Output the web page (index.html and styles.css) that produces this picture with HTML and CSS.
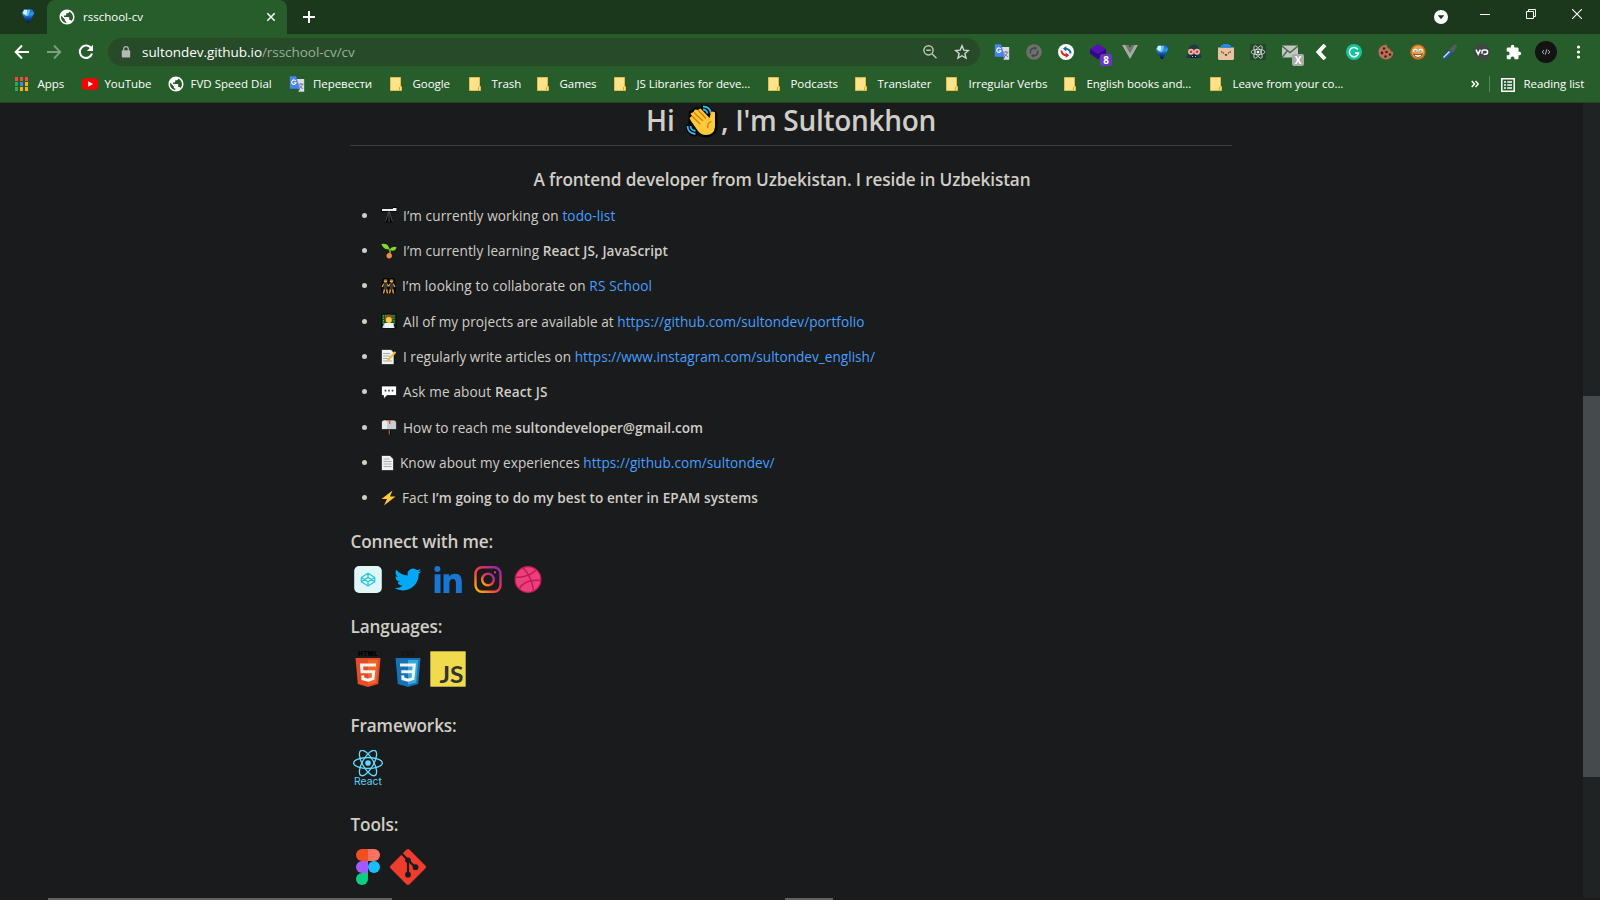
FILE: index.html
```html
<!DOCTYPE html>
<html lang="en">
<head>
<meta charset="utf-8">
<title>rsschool-cv</title>
<link rel="stylesheet" href="styles.css">
</head>
<body>
<svg width="0" height="0" class="defs" aria-hidden="true">
  <defs>
    <linearGradient id="gem" x1="0" y1="0" x2="0" y2="1"><stop offset="0" stop-color="#0d5fd0"/><stop offset=".35" stop-color="#2f9cf0"/><stop offset=".7" stop-color="#0b3f9c"/><stop offset="1" stop-color="#04173f"/></linearGradient>
    <linearGradient id="insta" x1="0" y1="1" x2="1" y2="0"><stop offset="0" stop-color="#ffc107"/><stop offset=".35" stop-color="#f9552f"/><stop offset=".6" stop-color="#e0325c"/><stop offset="1" stop-color="#8a24b8"/></linearGradient>
    <symbol id="i-gem" viewBox="0 0 16 16"><path d="M4 1.200h8L14.300 5 9 15H7L1.700 5z" fill="url(#gem)"/><path d="M4 1.800h3.500L6.500 8 2.800 5z" fill="#d8f3ff"/><path d="M7.500 1.800h2.800L8 8H6.500z" fill="#6fc4fa"/></symbol>
    <symbol id="i-globe" viewBox="1.300 1.300 21.400 21.400"><path d="M12 2C6.480 2 2 6.480 2 12s4.480 10 10 10 10-4.480 10-10S17.520 2 12 2zm-1 17.930c-3.950-.490-7-3.850-7-7.930 0-.620.080-1.210.210-1.790L9 15v1c0 1.100.900 2 2 2v1.930zm6.900-2.540c-.260-.810-1-1.390-1.900-1.390h-1v-3c0-.550-.450-1-1-1H8v-2h2c.550 0 1-.450 1-1V7h2c1.100 0 2-.900 2-2v-.410c2.930 1.190 5 4.060 5 7.410 0 2.080-.800 3.970-2.100 5.390z" fill="#fff"/></symbol>
    <symbol id="i-translate" viewBox="0 0 16 16"><path d="M7 3h8.200v12.800H9.500z" fill="#dadce0"/><path d="M9.500 8.200h5M12 7v1.200M13.500 8.200c-.5 2-1.800 3.500-3.500 4.500M10.500 9.500c.8 1.500 1.800 2.400 3.300 3.200" stroke="#6b7684" stroke-width=".9" fill="none"/><path d="M.8.300H7L11 12.800H.8z" fill="#4a84ee"/><path d="M8.800 12.800 11 12.800 9.500 15.800z" fill="#2a56c6"/><path d="M6.800 5A2.200 2.200 0 1 0 7 6.800H5" stroke="#fff" stroke-width="1.100" fill="none"/></symbol>
    <symbol id="i-folder" viewBox="0 0 12 14"><path d="M.5.500h10v9h1v4H.5z" fill="#ffe28c" stroke="#e9bd45"/><path d="M9.500 10v3.500" stroke="#d9a92c"/></symbol>
    <symbol id="i-react" viewBox="-12 -12 24 24"><circle r="2.200" fill="currentColor"/><g fill="none" stroke="currentColor" stroke-width="1.050"><ellipse rx="11.200" ry="4.300"/><ellipse rx="11.200" ry="4.300" transform="rotate(60)"/><ellipse rx="11.200" ry="4.300" transform="rotate(120)"/></g></symbol>
  </defs>
</svg>

<header class="tabstrip">
  <div class="pinned"><svg class="s16"><use href="#i-gem"/></svg></div>
  <div class="tab">
    <svg class="s16"><use href="#i-globe"/></svg>
    <span class="tab-title">rsschool-cv</span>
    <svg class="tab-close" viewBox="0 0 10 10"><path d="M1.300 1.300l7.400 7.400M8.700 1.300 1.300 8.700" stroke="#fff" stroke-width="1.500"/></svg>
  </div>
  <svg class="newtab" viewBox="0 0 12 12"><path d="M6 0v12M0 6h12" stroke="#fff" stroke-width="2"/></svg>
  <div class="window-buttons">
    <svg viewBox="0 0 14 14" class="search-tabs"><circle cx="7" cy="7" r="7" fill="#fff"/><path d="M3.800 5.200h6.400L7 9.300z" fill="#1b381c"/></svg>
    <svg viewBox="0 0 10 10" class="wb"><path d="M0 5.500h10" stroke="#fff"/></svg>
    <svg viewBox="0 0 10 10" class="wb"><path d="M.5 2.500h7v7h-7zM2.500 2.500v-2h7v7h-2" fill="none" stroke="#fff"/></svg>
    <svg viewBox="0 0 10 10" class="wb"><path d="M0 0l10 10M10 0 0 10" stroke="#fff" stroke-width="1.100"/></svg>
  </div>
</header>

<nav class="toolbar">
  <span class="cell"><svg class="s16" viewBox="0 0 16 16"><path d="M15 8H2M8 1.500 1.700 8 8 14.500" fill="none" stroke="#fff" stroke-width="2"/></svg></span>
  <span class="cell"><svg class="s16" viewBox="0 0 16 16"><path d="M1 8h13M8 1.500 14.300 8 8 14.500" fill="none" stroke="#7f9f81" stroke-width="1.800"/></svg></span>
  <span class="cell"><svg class="s16" viewBox="0 0 16 16"><path d="M13.300 4.500A6.200 6.200 0 1 0 14 9.500" fill="none" stroke="#fff" stroke-width="2"/><path d="M15 .8V7H8.800z" fill="#fff"/></svg></span>
  <div class="omnibox">
    <svg class="lock" viewBox="0 0 10 12"><rect x=".8" y="4.300" width="8.400" height="7.200" rx=".8" fill="#b4b9b8"/><path d="M2.700 5V3a2.300 2.300 0 0 1 4.600 0v2" fill="none" stroke="#b4b9b8" stroke-width="1.200"/></svg>
    <span class="url">sultondev.github.io<span class="path">/rsschool-cv/cv</span></span>
    <svg class="s16" viewBox="0 0 16 16"><g fill="none" stroke="#b9c4ba" stroke-width="1.500"><circle cx="6.500" cy="6.300" r="4.600"/><path d="M10 9.800l4.500 4.500M4.300 6.300h4.400"/></g></svg>
    <svg class="s16" viewBox="0 0 16 16"><path d="M8 1.800l1.800 4.300 4.600.4-3.500 3 1.100 4.600L8 11.700l-4 2.400 1.100-4.600-3.500-3 4.600-.4z" fill="none" stroke="#d0d8d0" stroke-width="1.400"/></svg>
  </div>
  <div class="extensions">
    <span class="cell"><svg class="s16"><use href="#i-translate"/></svg></span>
    <span class="cell"><svg class="s16" viewBox="0 0 16 16"><circle cx="8" cy="8" r="7.800" fill="#6f6f6f"/><path d="M4.500 9.500A4 4 0 0 1 9 4.200M11.500 6.500A4 4 0 0 1 7 11.800" fill="none" stroke="#3d4a3e" stroke-width="1.600"/><path d="M8.500 2.300v4L11 4.200zM7.500 9.700v4L5 11.800z" fill="#3d4a3e"/></svg></span>
    <span class="cell"><svg class="s16" viewBox="0 0 16 16"><circle cx="8" cy="8" r="8" fill="#fff"/><path d="M12.600 9.500A4.800 4.800 0 0 0 7.500 4.800" fill="none" stroke="#1c6a9c" stroke-width="2"/><path d="M8.300 2v5.500L4.800 4.700z" fill="#1c6a9c"/><path d="M3.400 6.500A4.800 4.800 0 0 0 8.500 11.200" fill="none" stroke="#e02424" stroke-width="2"/><path d="M7.700 8.500V14l3.500-2.800z" fill="#e02424"/></svg></span>
    <span class="cell"><svg class="s16" viewBox="0 0 16 16"><path d="M8 0l8 5-8 5-8-5z" fill="#5511b8"/><path d="M0 5l8 5 8-5v4.500L8 15.500 0 9.500z" fill="#35058f"/></svg><b class="badge violet">8</b></span>
    <span class="cell"><svg class="s16" viewBox="0 0 16 16"><path d="M0 1h3.500L8 8.800 12.500 1H16L8 15z" fill="#a8aaa8"/><path d="M3.500 1h3L8 3.700 9.500 1h3L8 8.800z" fill="#717771"/></svg></span>
    <span class="cell"><svg class="s16"><use href="#i-gem"/></svg></span>
    <span class="cell"><svg class="s16" viewBox="0 0 16 16"><path d="M2.500 7C2.500 2.500 5 .8 8 .8s5.500 1.700 5.500 6.200L16 14H0z" fill="#20384a"/><path d="M4 14l2-3h4l2 3z" fill="#10202c"/><circle cx="5" cy="7.800" r="3" fill="#f5b7a6"/><circle cx="11" cy="7.800" r="3" fill="#f5b7a6"/><circle cx="5" cy="7.800" r="1.300" fill="#c8362e"/><circle cx="11" cy="7.800" r="1.300" fill="#c8362e"/><path d="M6 12.500h1M9 12.500h1" stroke="#bcd"/></svg></span>
    <span class="cell"><svg class="s16" viewBox="0 0 16 16"><path d="M0 3.500h16V15l-1 1H1l-1-1z" fill="#e9c3a0"/><path d="M3 3.700V1h2V0h6v1h2v2.700z" fill="#2488e8"/><path d="M3 8h1.500M11.500 8H13M5.500 8.500v1M10.500 8.500v1M7 10.500q1 1 2 0" fill="none" stroke="#2b2320" stroke-width="1.200"/></svg></span>
    <span class="cell"><svg class="s16 react-ext" viewBox="-8 -8 16 16"><use href="#i-react" x="-7.500" y="-7.500" width="15" height="15"/></svg></span>
    <span class="cell"><svg class="s16" viewBox="0 0 16 16"><path d="M0 1.500h16v12H0z" fill="#c3c7c3"/><path d="M0 2l8 6.500L16 2M0 13.500l5.500-7" fill="none" stroke="#4b6a4d" stroke-width="1.400"/></svg><b class="badge grey">X</b></span>
    <span class="cell"><svg class="s16" viewBox="0 0 16 16"><path d="M11 1 4.500 8 11 15" fill="none" stroke="#fff" stroke-width="4"/></svg></span>
    <span class="cell"><svg class="s16" viewBox="0 0 16 16"><circle cx="8" cy="8" r="8" fill="#15c39a"/><path d="M11.800 5.500A4.600 4.600 0 1 0 12.500 9H9" fill="none" stroke="#fff" stroke-width="1.500"/></svg></span>
    <span class="cell"><svg class="s16" viewBox="0 0 16 16"><path d="M9 .8A3.500 3.500 0 0 0 12 5c0 2 1.500 3 3.300 3A7.400 7.400 0 1 1 9 .8z" fill="#b87058"/><g fill="#4a1d14"><circle cx="6" cy="4.500" r="1.300"/><circle cx="4" cy="9" r="1.400"/><circle cx="8.500" cy="8" r="1.300"/><circle cx="7.500" cy="12.500" r="1.300"/><circle cx="12" cy="10.500" r="1.300"/></g></svg></span>
    <span class="cell"><svg class="s16" viewBox="0 0 16 16"><circle cx="8" cy="8" r="7.800" fill="#b8641c"/><circle cx="8" cy="8" r="6.500" fill="#e5a050"/><ellipse cx="5.300" cy="6.500" rx="2.300" ry="1.700" fill="#fff"/><ellipse cx="10.700" cy="6.500" rx="2.300" ry="1.700" fill="#fff"/><path d="M4.500 7h2M9.500 7h2" stroke="#432"/><path d="M3.500 10q4.500 1.500 9 0-1.500 3.500-4.500 3.500t-4.500-3.500z" fill="#fff" stroke="#7c3b12" stroke-width=".9"/></svg></span>
    <span class="cell"><svg class="s16" viewBox="0 0 16 16"><path d="M1 15l1-3 6-6 2.500 2.500-6.500 6z" fill="#2c50c8"/><path d="M1.500 13.500 7.500 7.500" stroke="#dce4ff" fill="none" stroke-width="1.300"/><path d="M7.500 5 12.500.5q2.500-.5 2.500 2L11 9z" fill="#555b60"/></svg></span>
    <span class="cell"><svg class="s16" viewBox="0 0 16 16"><circle cx="8" cy="8" r="8" fill="#3f4542"/><path d="M2 5.700l2.200 4.500 2.200-4.500M8 9.800V7.500Q8 6 10 6h1.500a2 2 0 0 1 0 4.200H9.500" fill="none" stroke="#fff" stroke-width="1.500"/></svg></span>
    <span class="cell"><svg class="s16" viewBox="1 0 23 23"><path d="M20.500 11H19V7c0-1.100-.9-2-2-2h-4V3.500a2.500 2.500 0 0 0-5 0V5H4c-1.100 0-1.990.9-1.990 2v3.800H3.500c1.490 0 2.700 1.210 2.700 2.700s-1.210 2.700-2.700 2.700H2V20c0 1.100.9 2 2 2h3.800v-1.500c0-1.490 1.210-2.700 2.700-2.700s2.700 1.210 2.700 2.700V22H17c1.100 0 2-.9 2-2v-4h1.500a2.500 2.500 0 0 0 0-5z" fill="#fff"/></svg></span>
    <span class="cell"><svg class="avatar" viewBox="0 0 22 22"><circle cx="11" cy="11" r="11" fill="#131313"/><path d="M9 9 7.200 11 9 13M13 9l1.800 2L13 13M11.800 8.300l-1.500 5.400" fill="none" stroke="#c6c6c6" stroke-width=".9"/></svg></span>
    <span class="cell"><svg class="s16" viewBox="0 0 16 16"><g fill="#fff"><circle cx="8.500" cy="3" r="1.600"/><circle cx="8.500" cy="8" r="1.600"/><circle cx="8.500" cy="13" r="1.600"/></g></svg></span>
  </div>
</nav>

<nav class="bookmarks">
  <span class="bm"><svg class="bmi" viewBox="0 0 14 14"><g fill="#f04b3c"><path d="M0 0h3v4H0zM5 0h3v4H5zM10 0h3v4h-3z"/></g><path d="M0 5h3v4H0zM0 10h3v4H0z" fill="#2fa653"/><path d="M5 5h3v4H5z" fill="#4285f4"/><path d="M10 5h3v4h-3zM5 10h3v4H5zM10 10h3v4h-3z" fill="#f7b211"/></svg><span>Apps</span></span>
  <span class="bm"><svg class="s16" viewBox="0 0 16 16"><rect x="0" y="2.200" width="16" height="11.600" rx="2.800" fill="#f00"/><path d="M6.200 5.300v5.400L11 8z" fill="#fff"/></svg><span>YouTube</span></span>
  <span class="bm"><svg class="s16"><use href="#i-globe"/></svg><span class="fvd">FVD Speed Dial</span></span>
  <span class="bm wide"><svg class="s16"><use href="#i-translate"/></svg><span>Перевести</span></span>
  <span class="bm"><svg class="fold"><use href="#i-folder"/></svg><span>Google</span></span>
  <span class="bm"><svg class="fold"><use href="#i-folder"/></svg><span>Trash</span></span>
  <span class="bm"><svg class="fold"><use href="#i-folder"/></svg><span>Games</span></span>
  <span class="bm"><svg class="fold"><use href="#i-folder"/></svg><span>JS Libraries for deve...</span></span>
  <span class="bm"><svg class="fold"><use href="#i-folder"/></svg><span>Podcasts</span></span>
  <span class="bm"><svg class="fold"><use href="#i-folder"/></svg><span>Translater</span></span>
  <span class="bm"><svg class="fold"><use href="#i-folder"/></svg><span>Irregular Verbs</span></span>
  <span class="bm"><svg class="fold"><use href="#i-folder"/></svg><span>English books and...</span></span>
  <span class="bm"><svg class="fold"><use href="#i-folder"/></svg><span>Leave from your co...</span></span>
  <svg class="more" viewBox="0 0 8 8"><path d="M.7 1 3.500 4 .7 7M4.500 1l2.800 3-2.800 3" fill="none" stroke="#fff" stroke-width="1.500"/></svg>
  <span class="bm reading"><svg class="bmi" viewBox="0 0 14 14"><path d="M.8.800h12.400v12.400H.8zM3 4h2M3 7h2M3 10h2M6.200 4H11M6.200 7H11M6.200 10H11" fill="none" stroke="#fff" stroke-width="1.500"/></svg><span>Reading list</span></span>
</nav>

<div class="viewport">
<main class="page">
  <h1><span>Hi</span><svg class="wave" viewBox="0 0 32 34"><g stroke="#050505" stroke-width="5" fill="none" stroke-linejoin="round" stroke-linecap="round"><path d="M17 3q6 0 7 6M2 23q1 6 7 7"/><path d="M5 9 11 5 21 12 25 8 29 10V24Q27 31 19 31L12 29 5 19z" fill="#050505"/></g><path d="M17 2.500q7 0 8 7M17 5.500q3.500 0 4.500 4M1.500 22q0 7 8 8M4.500 22q0 4 5 5" fill="none" stroke="#35b6e6" stroke-width="1.800"/><path d="M5 17 3.500 14 6 12 4.500 9.500 7.500 8 9 5.500 12 6 14.500 4.500 23.500 14 25 8.500Q26.500 6.500 29 8.500V23Q28 31 20 31 15 31 12 27z" fill="#ffc83d"/><path d="M6 12l8 8M8 8.500l9 8.500M12 6l8 8.500M22 24q-1.500-5 3.500-6.500" fill="none" stroke="#d67d00" stroke-width="1.300"/></svg><span class="h1-rest">, I'm Sultonkhon</span></h1>
  <h3 class="subtitle"><span>A frontend developer from Uzbekistan. I reside in Uzbekistan</span></h3>

  <ul class="facts">
    <li class="l1"><svg class="emo" viewBox="0 0 16 16"><path d="M6 6 4 15.500h8L10 6z" fill="#050505"/><path d="M0 2h12V0h4v5H0z" fill="#050505"/><path d="M1 2h11V1h3.500v3H1z" fill="#eee"/><path d="M8 4v11M7.500 5 4.500 14.500M8.500 5l3 9.500" stroke="#555" stroke-width=".9"/></svg><span>I’m currently working on <a>todo-list</a></span></li>
    <li class="l2"><svg class="emo" viewBox="0 0 16 16"><path d="M8.500 12Q10 8 8 6" stroke="#66a80f" stroke-width="1.800" fill="none"/><path d="M.3 1Q7-.5 8.500 6 3 7.500.3 1zM8.500 6.800Q11 2.500 15.700 4.200 14 9.500 8.500 6.800z" fill="#86d62b"/><circle cx="8.200" cy="12.800" r="2.700" fill="#f28b45"/></svg><span>I’m currently learning <b>React JS, JavaScript</b></span></li>
    <li class="l3"><svg class="emo slim" viewBox="0 0 15 16"><path d="M2 0h11l2 6v5l-1 5H1L0 11V6z" fill="#070707"/><g fill="none" stroke="#e9a531" stroke-width="1.400"><path d="M2.800 5.800 1.200 9M6 5.800 7.300 8.500M9 5.800 7.700 8.500M12.200 5.800 13.800 9M3.500 11l-1 4.500M5.500 11l1 4.500M9.500 11l-1 4.500M11.500 11l1 4.500"/></g><path d="M2.800 5h3.500v6.500H2.800zM8.800 5h3.500v6.500H8.800z" fill="#393939"/><circle cx="4.500" cy="3" r="1.800" fill="#f2b23a"/><circle cx="10.500" cy="3" r="1.800" fill="#f2b23a"/><path d="M2.800 2.500q1.700-2.500 3.400 0zM8.800 2.500q1.700-2.500 3.400 0z" fill="#6b3f1c"/></svg><span>I’m looking to collaborate on <a>RS School</a></span></li>
    <li class="l4"><svg class="emo" viewBox="0 0 16 16"><path d="M0 .5h15.500v15H0z" fill="#080a08"/><path d="M1 1.500h13.500v10H1z" fill="#12501f"/><path d="M2.500 2v9M13 2v9M4.500 2v3M11 2v3" stroke="#3cb862" stroke-dasharray="1.500 1"/><circle cx="7.800" cy="5.500" r="4" fill="#8a5228"/><circle cx="7.800" cy="7" r="3" fill="#ffc83d"/><path d="M1.500 14q1-4.500 6-4 5-.5 6 4v1h-12z" fill="#bcd7e6"/><path d="M3.500 10h9v5h-9z" fill="#f2f2f2"/></svg><span>All of my projects are available at <a>https://github.com/sultondev/portfolio</a></span></li>
    <li class="l5"><svg class="emo" viewBox="0 0 16 16"><path d="M.5.500H10l3 3v12H.5z" fill="#f2f2f2" stroke="#080808" stroke-width=".6"/><path d="M2 4.500h7M2 7h7M2 9.500h6M2 12h9" stroke="#aaa"/><path d="M14.500 3 7.500 10.500 6.500 12" stroke="#f3bb38" stroke-width="2" fill="none"/></svg><span>I regularly write articles on <a>https://www.instagram.com/sultondev_english/</a></span></li>
    <li class="l6"><svg class="emo" viewBox="0 0 16 16"><path d="M.5 2h15v9.500H6L2.500 15v-3.500h-2z" fill="#fff" stroke="#060606" stroke-width=".7"/><path d="M3.700 6.700h1.600M7.200 6.700h1.600M10.700 6.700h1.600" stroke="#333" stroke-width="1.700"/></svg><span>Ask me about <b>React JS</b></span></li>
    <li class="l7"><svg class="emo" viewBox="0 0 16 16"><path d="M7 9h3v6.500H7z" fill="#080808"/><path d="M8.300 10v5.500" stroke="#a15e38" stroke-width="1.400"/><path d="M.5 4q0-3 3-3h9q3 0 3 3v6.500H.5z" fill="#c8ccd0" stroke="#080808" stroke-width=".6"/><path d="M1 4q0-2.500 2.500-2.500T6 4v6H1z" fill="#e8ebed"/><path d="M8.700 5V1.500M7 1.700h3" stroke="#e9502d" stroke-width="1.300" fill="none"/></svg><span>How to reach me <b>sultondeveloper@gmail.com</b></span></li>
    <li class="l8"><svg class="emo doc" viewBox="0 0 13 16"><path d="M.5.500H9l3.500 3.500v11.500H.5z" fill="#f2f2f2" stroke="#080808" stroke-width=".6"/><path d="M2.500 4h6M2.500 6.500h8M2.500 9h8M2.500 11.500h8" stroke="#aaa"/></svg><span>Know about my experiences <a>https://github.com/sultondev/</a></span></li>
    <li class="l9"><svg class="emo slim" viewBox="0 0 15 16"><path d="M11.500.5.5 9H6L3 15.500 14.500 6.500H9z" fill="#ffc83d"/></svg><span>Fact <b>I’m going to do my best to enter in EPAM systems</b></span></li>
  </ul>

  <section class="connect">
    <h3>Connect with me:</h3>
    <div class="icons">
      <svg viewBox="0 0 36 27"><rect x="4.200" width="27.600" height="27" rx="5" fill="#e0f7fa"/><path d="M18 7.200 24.700 11.500v4.200L18 20l-6.700-4.300v-4.200zM11.300 11.500 18 15.800l6.700-4.300M11.300 15.700 18 11.400l6.700 4.300M18 7.200v4.200M18 15.800V20" fill="none" stroke="#26c6da" stroke-width="1.300" stroke-linejoin="round"/></svg>
      <svg viewBox="0 0 36 27"><path transform="translate(4.500 .1) scale(1.120)" d="M23.950 4.570a10 10 0 0 1-2.820.78 4.960 4.960 0 0 0 2.160-2.730c-.95.560-2 .96-3.130 1.190a4.920 4.920 0 0 0-8.380 4.480C7.690 8.100 4.070 6.130 1.640 3.160a4.820 4.820 0 0 0-.67 2.480c0 1.710.87 3.210 2.190 4.100a4.900 4.900 0 0 1-2.230-.62v.06a4.920 4.920 0 0 0 3.950 4.830 5 5 0 0 1-2.210.08 4.940 4.940 0 0 0 4.600 3.420A9.870 9.870 0 0 1 0 19.540a14 14 0 0 0 7.550 2.210c9.050 0 14-7.500 14-13.980 0-.21 0-.42-.02-.63a9.940 9.940 0 0 0 2.420-2.570z" fill="#03a9f4"/></svg>
      <svg viewBox="0 0 36 27"><g fill="#1976d2"><circle cx="7.400" cy="3" r="3"/><path d="M4.600 8.300h5.900V27H4.600zM13.500 8.300h5.700v2.500c1-1.700 3-3 5.700-3 5.300 0 6.900 3.200 6.900 8.300V27h-5.900v-9.500c0-2.800-.6-4.600-3-4.600s-3.500 1.800-3.500 4.500V27h-5.900z"/></g></svg>
      <svg viewBox="0 0 36 27"><g fill="none" stroke="url(#insta)" stroke-width="2.400"><rect x="5.500" y="1.200" width="25" height="24.600" rx="6.500"/><circle cx="18" cy="13.500" r="5.800"/></g><circle cx="25" cy="6.300" r="1.100" fill="#f5445c"/></svg>
      <svg viewBox="0 0 36 27"><circle cx="18" cy="13.500" r="12.900" fill="#ec407a" stroke="#c2185b" stroke-width="1.200"/><path d="M13 1.500q9 10 10.500 23M5 11.500q14 0 21-7.500M9 23q6-10 21.500-8.500" fill="none" stroke="#c2185b" stroke-width="1.500"/></svg>
    </div>
  </section>

  <section>
    <h3>Languages:</h3>
    <div class="icons">
      <svg viewBox="0 0 36 36"><text x="18" y="4.900" class="logo-cap">HTML</text><path d="M5.500 7h25l-2.300 26L18 36 7.800 33z" fill="#e44d26"/><path d="M18 9v24.800l8.200-2.400L28.200 9z" fill="#f16529"/><path d="M26 14H11.500l.6 6.700h11.600l-.7 7L18 29.300l-5-1.500-.3-3.500" fill="none" stroke="#f4f4f4" stroke-width="3"/></svg>
      <svg viewBox="0 0 36 36"><text x="18" y="4.900" class="logo-cap dim">CSS</text><path d="M5.500 7h25l-2.300 26L18 36 7.800 33z" fill="#1572b6"/><path d="M18 9v24.800l8.200-2.400L28.200 9z" fill="#33a9dc"/><path d="M10 14h14.300l-.6 6.700H11.300M23.700 20.700l-.7 7L18 29.300l-5-1.500-.3-3.500" fill="none" stroke="#f4f4f4" stroke-width="3"/></svg>
      <svg viewBox="0 0 36 36"><rect x=".3" y=".3" width="35.400" height="35.400" fill="#f0db4f"/><text x="9.500" y="32" class="logo-js" textLength="24" lengthAdjust="spacingAndGlyphs">JS</text></svg>
    </div>
  </section>

  <section>
    <h3>Frameworks:</h3>
    <div class="icons">
      <svg viewBox="0 0 36 36" class="react"><use href="#i-react" x="2.650" y="-2.350" width="30.700" height="30.700"/><text x="4" y="35.200" class="logo-react" textLength="27.800" lengthAdjust="spacingAndGlyphs">React</text></svg>
    </div>
  </section>

  <section>
    <h3>Tools:</h3>
    <div class="icons">
      <svg viewBox="0 0 36 36"><path d="M12 0h6v12h-6a6 6 0 0 1 0-12z" fill="#f24e1e"/><path d="M18 0h6a6 6 0 0 1 0 12h-6z" fill="#ff7262"/><path d="M12 12h6v12h-6a6 6 0 0 1 0-12z" fill="#a259ff"/><circle cx="24" cy="18" r="6" fill="#1abcfe"/><path d="M12 24h6v6a6 6 0 1 1-6-6z" fill="#0acf83"/></svg>
      <svg viewBox="0 0 36 36"><path d="M16.400.7q1.600-1.400 3.200 0l15.700 15.700q1.400 1.600 0 3.200L19.600 35.300q-1.600 1.400-3.200 0L.7 19.600q-1.400-1.600 0-3.200z" fill="#f03c2e"/><path d="M11 4l7 7v14M18 11l7.500 7.500" fill="none" stroke="#191b1c" stroke-width="2.200"/><g fill="#191b1c"><circle cx="18" cy="11.200" r="2.800"/><circle cx="18" cy="25.700" r="2.900"/><circle cx="25.500" cy="18.200" r="2.900"/></g></svg>
    </div>
  </section>
</main>
<div class="scrollbar"><div class="thumb"></div></div>
</div>
<footer class="edge"><i class="seg-a"></i><i class="seg-b"></i></footer>
</body>
</html>
```

FILE: styles.css
```css
* { box-sizing: border-box; }

body {
  margin: 0;
  width: 1600px;
  height: 900px;
  overflow: hidden;
  display: grid;
  grid-template-rows: 34px 34px 35px 795px 2px;
  background: #191b1c;
  font-family: "Open Sans", "Noto Sans", sans-serif;
  font-size: 11.5px;
  color: #fff;
}
svg { display: block; flex: none; }
.defs { position: absolute; }
.s16 { width: 16px; height: 16px; }

.tabstrip { display: flex; background: #1b381c; align-items: center; }
.pinned { width: 47px; height: 34px; padding: 8px 0 0 20px; }
.tab {
  width: 240px;
  height: 34px;
  display: flex;
  align-items: center;
  padding: 0 11px 0 12px;
  background: #275d2b;
  border-radius: 8px 8px 0 0;
}
.tab-title { flex: 1; margin-left: 8px; padding-bottom: 2px; }
.tab-close { width: 10px; height: 10px; }
.newtab { width: 12px; height: 12px; margin-left: 16px; }
.window-buttons { display: flex; margin-left: auto; align-items: center; padding-right: 18px; gap: 36px; }
.search-tabs { width: 14px; height: 14px; margin: 0 -4px 0 0; }
.wb { width: 10px; height: 10px; margin-top: -6px; }

.toolbar { display: flex; align-items: center; background: #275d2b; padding: 2px 6px 0; }
.cell { width: 32px; height: 32px; display: flex; align-items: center; justify-content: center; position: relative; }
.omnibox {
  width: 872px;
  height: 28px;
  margin: 0 6px;
  border-radius: 14px;
  background: #274a29;
  display: flex;
  align-items: center;
  padding: 0 10px 0 13px;
  gap: 16px;
}
.lock { width: 10px; height: 12px; }
.url { flex: 1; font-size: 13.5px; margin-left: -5px; letter-spacing: -.05px; }
.url .path { color: #9aaf9b; }
.extensions { display: flex; }
.react-ext { color: #fff; background: #23452a; }
.badge {
  position: absolute;
  left: 18px;
  top: 18px;
  width: 12px;
  height: 12px;
  border-radius: 2px;
  font-size: 10px;
  line-height: 12px;
  text-align: center;
}
.violet { background: #6a37c0; }
.grey { background: #a9adaa; }
.avatar { width: 22px; height: 22px; }

.bookmarks {
  display: grid;
  grid-template-columns: 67px 86px 121px 101px 79px 68px 77px 154px 87px 91px 118px 146px 261px 18px 100px;
  align-items: center;
  padding: 0 0 2px 15px;
  background: #275d2b;
  border-bottom: 1px solid #214525;
  white-space: nowrap;
  letter-spacing: -.06px;
}
.bm { display: grid; grid-template-columns: 22.500px auto; justify-content: start; align-items: center; }
.bm > span { padding-bottom: 2px; }
.bm .fvd { letter-spacing: 0.02px; }
.bm.wide { grid-template-columns: 24px auto; }
.bmi { width: 14px; height: 14px; }
.fold { width: 12px; height: 14px; }
.more { width: 8px; height: 8px; }
.reading { border-left: 1px solid #5b8360; height: 16px; padding-left: 11px; }

.viewport { display: flex; }
.page { width: 1583px; padding: 0 351px 0 350px; color: #d1cdc7; }
h1, h3, ul { margin: 0; padding: 0; font-weight: 600; }
h1 {
  display: flex;
  justify-content: center;
  height: 43px;
  line-height: 35px;
  font-size: 28px;
  border-bottom: 1px solid #3a3e41;
  white-space: nowrap;
}
.wave { width: 32px; height: 34px; margin: 1px 3px 0 11px; }
.h1-rest { letter-spacing: -.3px; }
h3 { font-size: 17.2px; line-height: 24px; height: 24px; white-space: nowrap; letter-spacing: -.14px; }
.subtitle { margin-top: 21.500px; text-align: center; padding-right: 18px; }

.facts { margin-top: 6px; list-style: none; font-weight: 400; font-size: 13.6px; }
.facts li { display: flex; align-items: center; height: 35.350px; padding-left: 12px; white-space: nowrap; }
.facts li::before { content: ""; width: 5px; height: 5px; border-radius: 50%; background: #d1cdc7; margin-right: 14px; }
.facts a { color: #479fff; }
.facts b { font-weight: 600; }
.emo { width: 16px; height: 16px; margin-right: 6px; }
.emo.slim { width: 15px; }
.emo.doc { width: 13px; }
.l1 { letter-spacing: .1px; }
.l2, .l9 { letter-spacing: .08px; }
.l3 { letter-spacing: .14px; }
.l4 { letter-spacing: .06px; }
.l5 { letter-spacing: .02px; }
.l6 { letter-spacing: .13px; }
.l7, .l8 { letter-spacing: .035px; }

section { margin-top: 27px; }
.connect { margin-top: 14px; }
.connect + section { margin-top: 22px; }
section h3 { padding-left: .5px; }
.icons { display: flex; gap: 4px; margin-top: 12px; }
.icons svg { width: 36px; height: 36px; }
.connect .icons svg { height: 27px; }
.logo-cap { font: 900 6px Inter, sans-serif; text-anchor: middle; fill: #000; letter-spacing: .5px; }
.dim { fill: #131313; }
.logo-js { font: 700 22px Lato, sans-serif; fill: #323330; }
.react { color: #61dafb; }
.logo-react { font: 400 10.5px Inter, Roboto, sans-serif; fill: #5fd3f3; }

.scrollbar { width: 17px; background: #1f2323; padding-top: 293px; }
.thumb { height: 381px; background: #454a4d; }
.edge { display: flex; background: #191b1c; }
.seg-a { width: 344px; margin-left: 48px; background: #606263; }
.seg-b { width: 48px; margin-left: 393px; background: #606263; }
```
